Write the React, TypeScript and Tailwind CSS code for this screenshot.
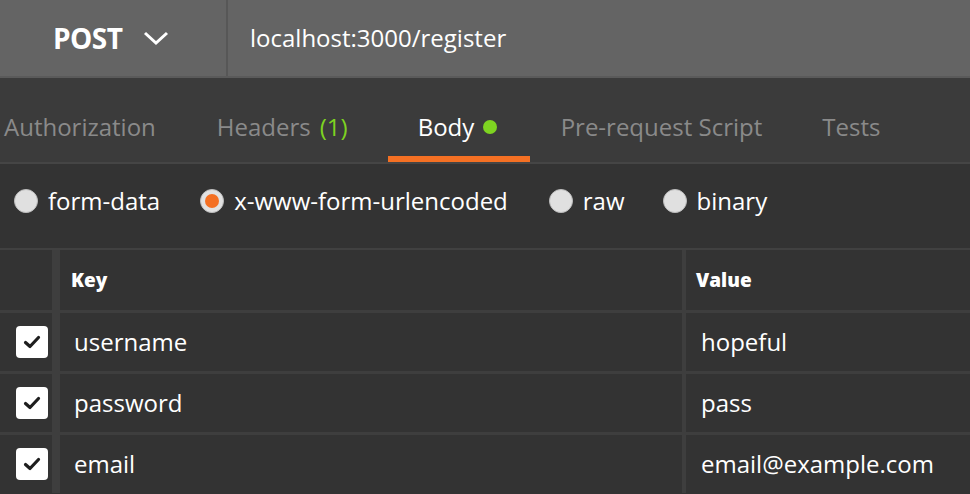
import React from "react";

const font = { fontFamily: '"Open Sans", "Noto Sans", sans-serif' };

function Check() {
  return (
    <div className="w-8 h-8 bg-white rounded-[4px] flex items-center justify-center">
      <svg width="20" height="20" viewBox="0 0 20 20">
        <path d="M3.5 10.5 L8 14.5 L16.5 5.5" fill="none" stroke="#1e1e1e" strokeWidth="3.2" strokeLinecap="round" strokeLinejoin="round" />
      </svg>
    </div>
  );
}

function Radio({ selected, label }: { selected?: boolean; label: string }) {
  return (
    <div className="flex items-center">
      {selected ? (
        <div className="w-6 h-6 rounded-full bg-[#e2e2e2] border border-[#bdbdbd] flex items-center justify-center">
          <div className="w-[14px] h-[14px] rounded-full bg-[#f47023]" />
        </div>
      ) : (
        <div className="w-6 h-6 rounded-full bg-[#e0e0e0] border border-[#bdbdbd]" />
      )}
      <span className="ml-[10px] text-[24px] text-white">{label}</span>
    </div>
  );
}

const rows = [
  ["username", "hopeful"],
  ["password", "pass"],
  ["email", "email@example.com"],
];

export default function App() {
  return (
    <div className="w-[970px] h-[494px] overflow-hidden bg-[#333333]" style={font}>
      {/* top bar */}
      <div className="h-[78px] bg-[#646464] border-b-2 border-[#5a5a5a] flex">
        <div className="w-[226px] flex items-center pl-[53px]">
          <span className="text-[28px] font-bold text-white tracking-[-0.5px]">POST</span>
          <svg className="ml-[20px]" width="26" height="16" viewBox="0 0 26 16">
            <path d="M2 3 L13 13 L24 3" fill="none" stroke="#fff" strokeWidth="3" />
          </svg>
        </div>
        <div className="w-[2px] bg-[#575757]" />
        <div className="flex-1 flex items-center pl-[22px]">
          <span className="text-[24px] text-white">localhost:3000/register</span>
        </div>
      </div>
      {/* tabs */}
      <div className="h-[86px] bg-[#3b3b3b] border-b-2 border-[#454545] flex items-stretch text-[24px]">
        <div className="w-[4px]" />
        <div className="flex items-center pt-[14px] text-[#8a8a8a]">Authorization</div>
        <div className="w-[61px]" />
        <div className="flex items-center pt-[14px] text-[#8a8a8a]">
          Headers <span className="ml-[9px] text-[#7ed321]">(1)</span>
        </div>
        <div className="w-[40px]" />
        <div className="w-[142px] flex flex-col">
          <div className="flex-1 flex items-center pt-[20px] pl-[30px] text-white">
            Body
            <span className="ml-[9px] w-[14px] h-[14px] rounded-full bg-[#7ed321] inline-block" />
          </div>
          <div className="h-[6px] bg-[#f47023]" />
        </div>
        <div className="w-[31px]" />
        <div className="flex items-center pt-[14px] text-[#8a8a8a]">Pre-request Script</div>
        <div className="w-[60px]" />
        <div className="flex items-center pt-[14px] text-[#8a8a8a]">Tests</div>
      </div>
      {/* radio row */}
      <div className="h-[86px] border-b-2 border-[#414141] flex items-center pl-[14px] pb-[10px]">
        <Radio label="form-data" />
        <div className="w-[40px]" />
        <Radio selected label="x-www-form-urlencoded" />
        <div className="w-[41px]" />
        <Radio label="raw" />
        <div className="w-[38px]" />
        <Radio label="binary" />
      </div>
      {/* table */}
      <div className="grid grid-cols-[56px_622px_284px] gap-x-[4px] gap-y-[3px] bg-[#3e3e3e]">
        <div className="h-[60px] bg-[#333333] border-r-4 border-[#3e3e3e]" />
        <div className="h-[60px] bg-[#333333] flex items-center pl-[11px] text-[19px] font-extrabold text-white">Key</div>
        <div className="h-[60px] bg-[#333333] flex items-center pl-[10px] text-[19px] font-extrabold text-white">Value</div>
        {rows.map(([k, v]) => (
          <React.Fragment key={k}>
            <div className="h-[58px] bg-[#333333] border-r-4 border-[#3e3e3e] flex items-center pl-[16px]">
              <Check />
            </div>
            <div className="h-[58px] bg-[#333333] flex items-center pl-[14px] text-[24px] text-white">{k}</div>
            <div className="h-[58px] bg-[#333333] flex items-center pl-[15px] text-[24px] text-white">{v}</div>
          </React.Fragment>
        ))}
      </div>
    </div>
  );
}
